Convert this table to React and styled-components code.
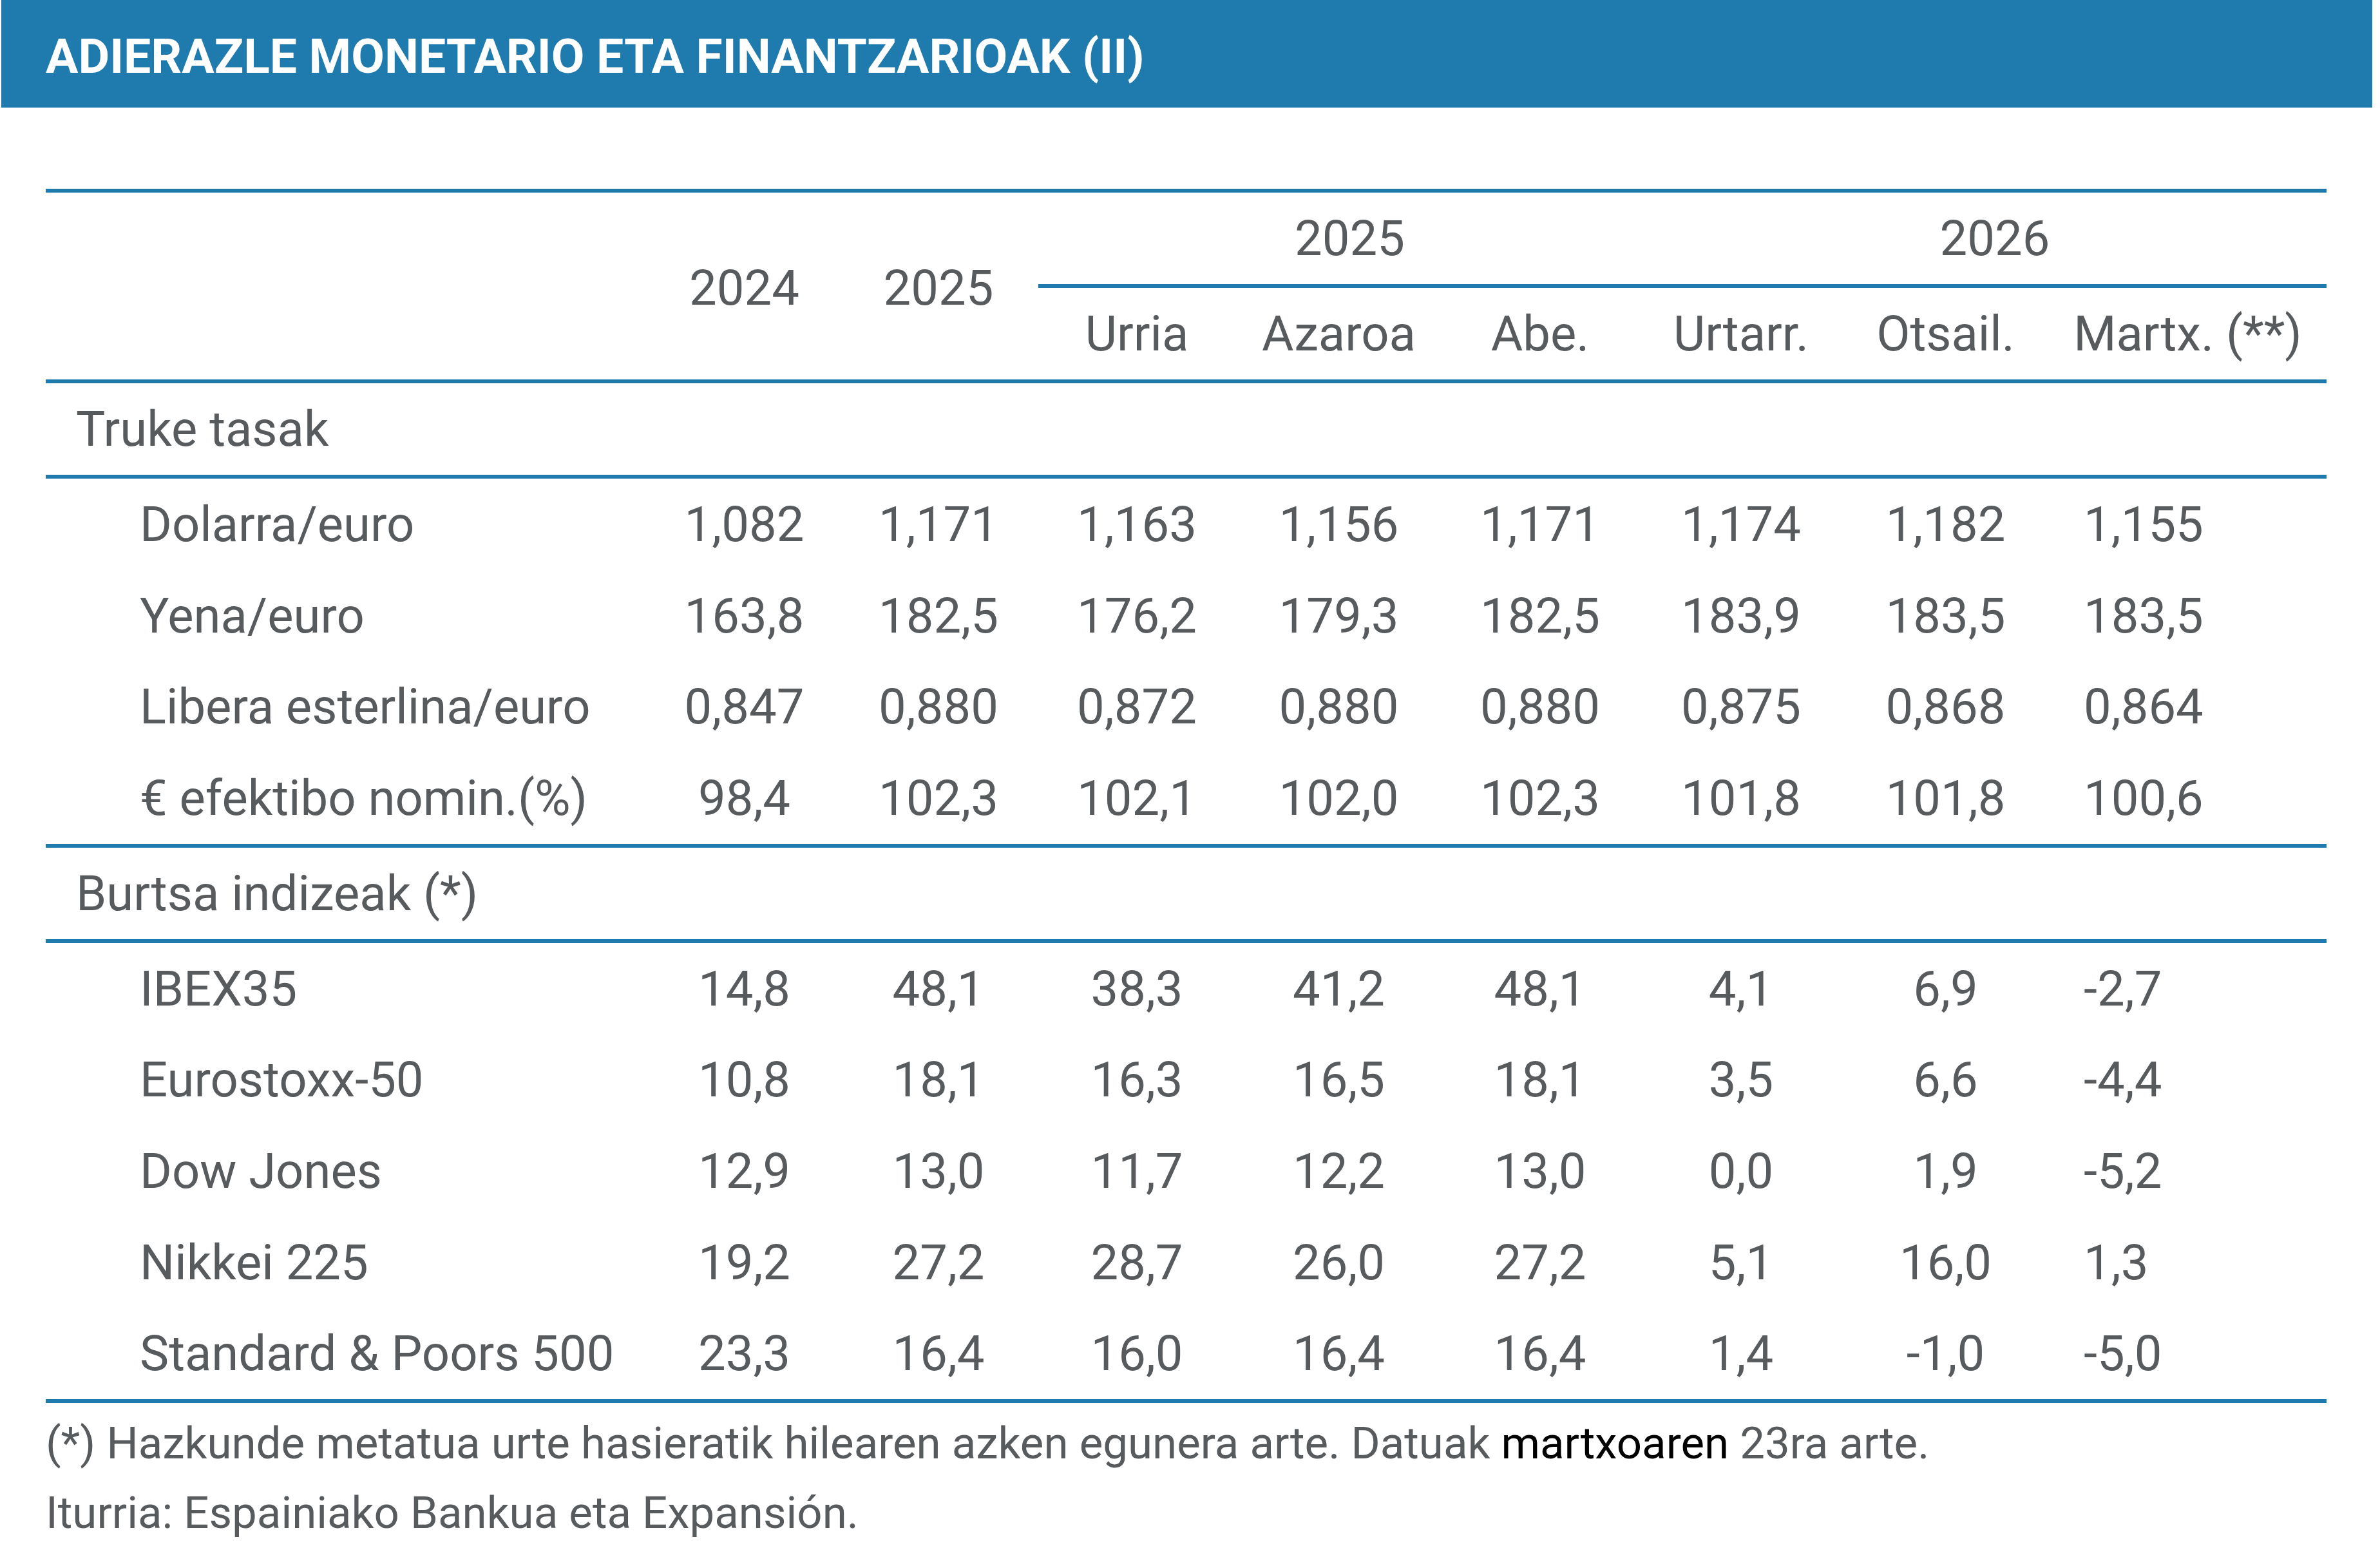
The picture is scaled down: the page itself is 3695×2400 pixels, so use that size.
import styled, { createGlobalStyle } from "styled-components";

const GlobalStyle = createGlobalStyle`
  body {
    margin: 0;
    background: #ffffff;
    font-family: Roboto, "Liberation Sans", sans-serif;
  }
`;

const COLS = "935px 299px 304px 312px 315px 310px 314px 321px 1fr";

const Page = styled.div`
  width: 3695px;
  height: 2400px;
  background: #ffffff;
  color: #585b5e;
`;

const TitleBar = styled.div`
  margin: 0 12px 0 2px;
  height: 167px;
  box-sizing: border-box;
  padding: 7px 0 0 69px;
  background: #1f7aad;
  color: #ffffff;
  font-size: 75px;
  font-weight: 700;
  line-height: 160px;
  white-space: nowrap;
`;

const Table = styled.div`
  margin: 126px 0 0 71px;
  width: 3541px;
  border-top: 6px solid #1f7aad;
`;

const HeadGrid = styled.div`
  display: grid;
  grid-template-columns: ${COLS};
  grid-template-rows: 142px 6px 142px;
  font-size: 76px;
  line-height: 1;
`;

const HeadCell = styled.div`
  display: flex;
  align-items: center;
  justify-content: center;
  grid-column: ${(p) => p.$col};
  grid-row: ${(p) => p.$row};
  padding-left: ${(p) => p.$shift || 0}px;
  padding-top: ${(p) => (p.$span ? 6 : 0)}px;
  white-space: nowrap;
`;

const SubRule = styled.div`
  grid-column: 4 / 10;
  grid-row: 2;
  margin-left: 3px;
  background: #1f7aad;
`;

const SectionRow = styled.div`
  display: flex;
  align-items: center;
  height: 142px;
  padding-left: 47px;
  border-top: 6px solid #1f7aad;
  border-bottom: 6px solid #1f7aad;
  font-size: 76px;
  line-height: 1;
`;

const Body = styled.div`
  border-bottom: ${(p) => (p.$last ? "6px solid #1f7aad" : "none")};
`;

const Row = styled.div`
  display: grid;
  grid-template-columns: ${COLS};
  align-items: center;
  height: 141.7px;
  font-size: 76px;
  line-height: 1;
  white-space: nowrap;
`;

const Label = styled.div`
  padding-left: 146px;
`;

const Value = styled.div`
  text-align: ${(p) => (p.$left ? "left" : "center")};
  padding-left: ${(p) => (p.$left ? "54px" : "0")};
`;

const Notes = styled.div`
  margin-left: 71px;
  padding-top: 9px;
  font-size: 69px;
  line-height: 108px;
  white-space: nowrap;
`;

const Dark = styled.span`
  color: #000000;
`;

const months = ["Urria", "Azaroa", "Abe.", "Urtarr.", "Otsail.", "Martx. (**)"];

const exchange = [
  { label: "Dolarra/euro", values: ["1,082", "1,171", "1,163", "1,156", "1,171", "1,174", "1,182", "1,155"] },
  { label: "Yena/euro", values: ["163,8", "182,5", "176,2", "179,3", "182,5", "183,9", "183,5", "183,5"] },
  { label: "Libera esterlina/euro", values: ["0,847", "0,880", "0,872", "0,880", "0,880", "0,875", "0,868", "0,864"] },
  { label: "€ efektibo nomin.(%)", values: ["98,4", "102,3", "102,1", "102,0", "102,3", "101,8", "101,8", "100,6"] },
];

const stocks = [
  { label: "IBEX35", values: ["14,8", "48,1", "38,3", "41,2", "48,1", "4,1", "6,9", "-2,7"] },
  { label: "Eurostoxx-50", values: ["10,8", "18,1", "16,3", "16,5", "18,1", "3,5", "6,6", "-4,4"] },
  { label: "Dow Jones", values: ["12,9", "13,0", "11,7", "12,2", "13,0", "0,0", "1,9", "-5,2"] },
  { label: "Nikkei 225", values: ["19,2", "27,2", "28,7", "26,0", "27,2", "5,1", "16,0", "1,3"] },
  { label: "Standard & Poors 500", values: ["23,3", "16,4", "16,0", "16,4", "16,4", "1,4", "-1,0", "-5,0"] },
];

const DataRows = ({ rows }) =>
  rows.map((r) => (
    <Row key={r.label}>
      <Label>{r.label}</Label>
      {r.values.map((v, i) => (
        <Value key={i} $left={i === r.values.length - 1}>
          {v}
        </Value>
      ))}
    </Row>
  ));

export default function App() {
  return (
    <Page>
      <GlobalStyle />
      <TitleBar>ADIERAZLE MONETARIO ETA FINANTZARIOAK (II)</TitleBar>
      <Table>
        <HeadGrid>
          <HeadCell $col="2" $row="1 / 4" $span>2024</HeadCell>
          <HeadCell $col="3" $row="1 / 4" $span>2025</HeadCell>
          <HeadCell $col="4 / 7" $row="1" $shift={36}>2025</HeadCell>
          <HeadCell $col="7 / 10" $row="1" $shift={36}>2026</HeadCell>
          <SubRule />
          {months.map((m, i) => (
            <HeadCell key={m} $col={String(i + 4)} $row="3">
              {m}
            </HeadCell>
          ))}
        </HeadGrid>
        <SectionRow>Truke tasak</SectionRow>
        <Body>
          <DataRows rows={exchange} />
        </Body>
        <SectionRow>Burtsa indizeak (*)</SectionRow>
        <Body $last>
          <DataRows rows={stocks} />
        </Body>
      </Table>
      <Notes>
        <div>
          (*) Hazkunde metatua urte hasieratik hilearen azken egunera arte. Datuak{" "}
          <Dark>martxoaren</Dark> 23ra arte.
        </div>
        <div>Iturria: Espainiako Bankua eta Expansión.</div>
      </Notes>
    </Page>
  );
}
